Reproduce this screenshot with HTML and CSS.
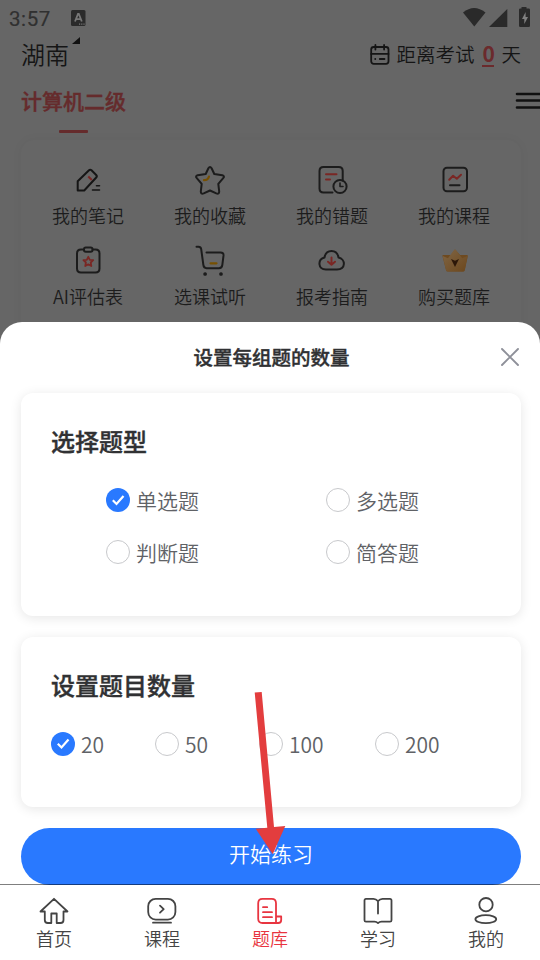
FILE: index.html
```html
<!DOCTYPE html>
<html lang="zh-CN">
<head>
<meta charset="UTF-8">
<title>题库</title>
<link rel="stylesheet" href="styles.css">
</head>
<body>
<div class="app">
  <header class="status">
    <span class="clock">3:57</span>
    <svg class="input-badge" width="15" height="16" viewBox="0 0 15 16"><rect width="14.5" height="16" rx="1.500" fill="#2b2b2b"/><path d="M4 11.500 7 4h.8l3 7.500M5 9.200h4.800" fill="none" stroke="#777" stroke-width="1.800"/><path d="M8 14.200h6" stroke="#777" stroke-width="1.200" stroke-dasharray="1.200 1"/></svg>
    <svg class="signals" width="68" height="20" viewBox="0 0 68 20"><path d="M0 5.500Q11 -3.500 22.500 5.500L11.300 19.500Z" fill="#2a2a2a"/><path d="M44.300 2v18H26z" fill="#2a2a2a"/><path d="M58.500 0h5v1.500h2.200q1.300 0 1.300 1.300v16q0 1.200-1.200 1.200h-8.600q-1.200 0-1.200-1.200v-16q0-1.300 1.200-1.300h1.300z" fill="#2a2a2a"/><path d="M62.600 5 59 12h2.300v5L65 10h-2.400z" fill="#808080"/></svg>
  </header>
  <div class="place-row">
    <span class="place">湖南</span>
    <svg class="corner" width="8" height="7" viewBox="0 0 8 7"><path d="M8 0v7H0z" fill="#111"/></svg>
    <div class="countdown">
      <svg width="20" height="21" viewBox="0 0 20 21" fill="none" stroke="#151515" stroke-width="1.800" stroke-linecap="round"><rect x="1.200" y="3" width="17.300" height="16.800" rx="2.500"/><path d="M1.200 9.900h17.300M5.400 1v4.500M14.100 1v4.500M5.200 15h.1M9.800 15h4.700"/></svg>
      <span>距离考试</span><b class="days">0</b><span>天</span>
    </div>
  </div>
  <div class="subject-row">
    <span class="subject">计算机二级</span>
    <svg width="25" height="18" viewBox="0 0 25 18"><path d="M2 2h25M2 8.500h25M2 15.500h25" stroke="#111" stroke-width="2.600" stroke-linecap="round"/></svg>
  </div>
  <div class="underline"></div>
  <section class="tools">
    <div class="tool"><svg viewBox="0 0 34 34" fill="none" stroke="#151515" stroke-width="2" stroke-linejoin="round" stroke-linecap="round"><path d="M6.700 27.500v-9.200L18 7.300q1.200-1.200 2.500 0l4.700 4.700q1.200 1.200 0 2.500L13.200 27.500z"/><path d="M25.500 22.800h3M21.500 27h7" stroke-width="1.600"/><path d="m17.300 13.500 3.500 3.500" stroke="#7a2724" stroke-linecap="butt"/></svg><span>我的笔记</span></div>
    <div class="tool"><svg viewBox="0 0 34 34" fill="none" stroke="#1c1c1c" stroke-width="2" stroke-linejoin="round" stroke-linecap="round"><path d="M15.400 5.300q1.600-2.700 3.200 0l2.700 5.700 8 1.300q2.800.8.900 2.900l-4.900 5.700.9 7.600q0 3-2.900 1.800L17 27.500l-6.300 2.800q-2.900 1.200-2.900-1.800l.9-7.600L3.800 15.200q-1.900-2.100.9-2.900l8-1.300z"/><path d="M11 17.200q4 0 5-3.700" stroke="#775000" stroke-width="2.200"/></svg><span>我的收藏</span></div>
    <div class="tool"><svg viewBox="0 0 34 34" fill="none" stroke="#1c1c1c" stroke-width="2" stroke-linejoin="round" stroke-linecap="round"><path d="M17.500 29.500H8.500q-4 0-4-4V8q0-4 4-4h15.200q4 0 4 4v9.500"/><circle cx="25" cy="23.500" r="6.600"/><path d="M25 20v3.500h3" stroke-width="1.600"/><path d="M11 11.200h10.500M11 16.500h4" stroke="#7a2724"/></svg><span>我的错题</span></div>
    <div class="tool"><svg viewBox="0 0 34 34" fill="none" stroke="#1c1c1c" stroke-width="2" stroke-linejoin="round" stroke-linecap="round"><rect x="6.500" y="4.800" width="23.500" height="23.500" rx="3.500"/><path d="M13 22.200h9.500"/><path d="m12.200 16.800 3.900-4 3.700 3 4.200-4" stroke="#7a2724"/></svg><span>我的课程</span></div>
    <div class="tool"><svg viewBox="0 0 34 34" fill="none" stroke="#1c1c1c" stroke-width="2" stroke-linejoin="round" stroke-linecap="round"><path d="M12.500 5.500H10Q6 5.500 6 9.500v15q0 4 4 4h14.500q4 0 4-4v-15q0-4-4-4h-2.800"/><rect x="13" y="3.500" width="8.500" height="4.300" rx="1.800"/><path d="m17.300 12.800 1.500 3 3.400.4-2.500 2.300.6 3.500-3-1.700-3 1.700.6-3.500-2.500-2.300 3.400-.4z" stroke="#7a2724" stroke-width="1.800"/></svg><span>AI评估表</span></div>
    <div class="tool"><svg viewBox="0 0 34 34" fill="none" stroke="#1c1c1c" stroke-width="2" stroke-linejoin="round" stroke-linecap="round"><path d="M3.500 2.800h2q2.300 0 2.700 2.400l2.200 16q.4 3 3.200 3h12.300q3 0 3.400-3l1.200-9.500q.3-3.200-3-3.200H13.500"/><path d="M17.500 19.300h6" stroke="#775000" stroke-width="2.200"/><circle cx="12.100" cy="30" r="1.200" fill="#1c1c1c" stroke-width="1.300"/><circle cx="28" cy="30" r="1.200" fill="#1c1c1c" stroke-width="1.300"/></svg><span>选课试听</span></div>
    <div class="tool"><svg viewBox="0 0 34 34" fill="none" stroke="#1c1c1c" stroke-width="2" stroke-linejoin="round" stroke-linecap="round"><path d="M11 25.500C2.800 25.500 2.300 15.500 9.500 13.500 11 4.700 22 4.700 23.500 13.500 30.800 15 31 25.500 22 25.500z"/><path d="M16.500 13.500v7.200m-3.500-3 3.500 3 3.500-3" stroke="#7a2724"/></svg><span>报考指南</span></div>
    <div class="tool"><svg viewBox="0 0 34 34"><defs><linearGradient id="gold" x2="1" y2="1"><stop stop-color="#806646"/><stop offset="1" stop-color="#6c471c"/></linearGradient></defs><path d="M6 11h8l4-5.500 5 5.500h7q1 0 .8 1.200l-3 13.800q-.4 1.500-2 1.500H11q-1.600 0-2-1.500L5.500 12.200Q5.300 11 6 11z" fill="#6e4a20"/><path d="M17 6q1-1.200 2 0l6.200 8.200 5.300-2.200L27.800 26q-.4 1.500-2 1.500H11q-1.600 0-2-1.500L5.700 12l5.300 2.200z" fill="url(#gold)"/><path d="m14 15 4 1.800L22 15l-4 8z" fill="#2c1708"/></svg><span>购买题库</span></div>
  </section>
</div>

<main class="sheet">
  <div class="sheet-head">
    <h1>设置每组题的数量</h1>
    <svg class="close" width="20" height="20" viewBox="0 0 20 20"><path d="M2 2 18 18M18 2 2 18" stroke="#8e9099" stroke-width="1.900" stroke-linecap="round"/></svg>
  </div>
  <section class="card types">
    <h2>选择题型</h2>
    <div class="type-grid">
      <label class="option"><i class="radio on"><svg viewBox="0 0 24 24"><path d="m6.800 12.200 3.700 3.800 7-8"/></svg></i>单选题</label>
      <label class="option"><i class="radio"></i>多选题</label>
      <label class="option"><i class="radio"></i>判断题</label>
      <label class="option"><i class="radio"></i>简答题</label>
    </div>
  </section>
  <section class="card counts">
    <h2>设置题目数量</h2>
    <div class="count-row">
      <label class="option"><i class="radio on"><svg viewBox="0 0 24 24"><path d="m6.800 11.700 3.700 3.800 7-8"/></svg></i>20</label>
      <label class="option"><i class="radio"></i>50</label>
      <label class="option"><i class="radio"></i>100</label>
      <label class="option"><i class="radio"></i>200</label>
    </div>
  </section>
  <button class="start">开始练习</button>
  <nav class="tabs">
    <a class="tab"><svg viewBox="0 0 32 30"><path d="M2.500 15.500 16 2.800l13.500 12.700h-4v8.500q0 3-3 3h-3.800v-9.500h-5.400V27H9.800q-3 0-3-3v-8.500z"/></svg><span>首页</span></a>
    <a class="tab"><svg viewBox="0 0 32 30"><rect x="2.200" y="2.800" width="27.200" height="20.800" rx="7.500"/><path d="m14 9.700 3.700 3.500-3.700 3.500M7 26.700h18"/></svg><span>课程</span></a>
    <a class="tab active"><svg viewBox="0 0 32 30"><path d="M24.500 27H8.500q-4.300 0-4.300-4.300V7.200q0-4.300 4.300-4.300h9.200q4.300 0 4.300 4.300V27h2.200q3 0 3-3v-3.500H22M9 11.200h4.200M9 16.200h9M9 21.200h9"/></svg><span>题库</span></a>
    <a class="tab"><svg viewBox="0 0 32 30"><path d="M16 17.500V5.200q-2-2.300-4.500-2.300H4q-1.500 0-1.500 1.500v19.800q0 1.500 1.500 1.500h8.500q2 0 3.500 1.400 1.500-1.400 3.500-1.400H28q1.500 0 1.500-1.500V4.400q0-1.500-1.500-1.500h-7.500Q18 2.900 16 5.200"/></svg><span>学习</span></a>
    <a class="tab"><svg viewBox="0 0 32 30"><circle cx="16" cy="8.700" r="6.700"/><ellipse cx="15.800" cy="23.200" rx="10.400" ry="4"/></svg><span>我的</span></a>
  </nav>
</main>
<svg class="pointer" width="32" height="164" viewBox="0 0 32 164"><path d="M.7.5 7.700 0 20 135 31.300 134 18.700 162.300 1.700 136.700 13.300 135.800z" fill="#e33d3e"/></svg>
</body>
</html>
```

FILE: styles.css
```css
* { box-sizing: border-box; }
body {
  margin: 0;
  width: 540px;
  height: 960px;
  overflow: hidden;
  position: relative;
  background: #666;
  font-family: "Noto Sans CJK SC", sans-serif;
  font-weight: 350;
  color: #151515;
}
svg { display: block; flex: none; }
h1, h2 { margin: 0; color: #303133; font-weight: 500; -webkit-text-stroke: .4px #303133; }

.app { height: 322px; overflow: hidden; }
.status { height: 36px; display: flex; align-items: center; padding-left: 9px; }
.clock {
  font: 400 20.5px/24px Roboto, sans-serif;
  color: #303030;
  -webkit-text-stroke: .2px #303030;
  width: 62px;
  letter-spacing: .6px;
  padding-top: 1px;
}
.signals { margin: -2px 9px 0 auto; }
.place-row { height: 36px; display: flex; align-items: center; padding: 0 19px 0 21px; }
.place { font-size: 24px; line-height: 36px; }
.corner { margin: -28px 0 0 3px; }
.countdown { margin-left: auto; display: flex; align-items: center; font-size: 19.5px; line-height: 30px; }
.countdown svg { margin-right: 6px; }
.days { color: #6b2a2c; width: 12px; margin: 0 7px 0 8px; font-size: 21px; font-weight: 700; line-height: 23px; border-bottom: 2px solid #6b2a2c; text-align: center; }
.subject-row { height: 58px; display: flex; align-items: center; justify-content: space-between; padding-left: 21px; }
.subject { font-size: 21px; font-weight: 500; -webkit-text-stroke: .4px #652b2c; color: #652b2c; margin-top: -2px; }
.underline { width: 29px; height: 3px; margin-left: 59px; background: #652b2c; border-radius: 1px; }
.tools {
  margin: 7px 19px 0 21px;
  height: 220px;
  padding: 23px 6px 0;
  border-radius: 14px;
  box-shadow: 0 0 12px rgba(0, 0, 0, .04);
  display: grid;
  grid-template-columns: repeat(4, 122px);
  grid-template-rows: 81px 81px;
}
.tool { display: flex; flex-direction: column; align-items: center; font-size: 18px; line-height: 24px; color: #1c1c1c; }
.tool svg { width: 34px; height: 34px; margin-bottom: 6px; }

.sheet {
  position: absolute;
  left: 0;
  top: 322px;
  width: 540px;
  height: 638px;
  background: #fff;
  border-radius: 22px 22px 0 0;
  display: flex;
  flex-direction: column;
}
.sheet-head { height: 71px; padding-bottom: 2px; display: grid; grid-template-columns: 60px 1fr 60px; align-items: center; }
.sheet-head h1 { grid-column: 2; text-align: center; font-size: 19.500px; line-height: 30px; padding-left: 3px; }
.close { justify-self: center; }
.card {
  margin: 0 19px 21px 21px;
  padding: 30px 30px 0;
  border-radius: 12px;
  background: #fff;
  box-shadow: 0 2px 12px rgba(0, 0, 0, .1);
}
.types { height: 223px; }
.counts { height: 170px; }
.card h2 { font-size: 24px; line-height: 36px; }
.type-grid { display: grid; grid-template-columns: 220px 1fr; row-gap: 28px; margin: 29px 0 0 55px; }
.option { display: flex; align-items: center; height: 24px; gap: 6px; font-size: 21px; color: #606266; }
.radio { display: block; flex: none; width: 24px; height: 24px; border: 1px solid #c8c9cc; border-radius: 50%; }
.radio.on { border: 0; background: #2979ff; }
.radio path { fill: none; stroke: #fff; stroke-width: 2.200; }
.count-row { display: grid; grid-template-columns: 104px 104px 116px 1fr; margin-top: 29px; }
.start {
  flex: none;
  margin: 0 19px 0 21px;
  height: 57px;
  padding: 0 0 8px;
  border: 0;
  border-radius: 29px;
  background: #2979ff;
  color: #fff;
  font: 350 21px/30px "Noto Sans CJK SC", sans-serif;
}
.tabs {
  margin-top: -1px;
  height: 76px;
  border-top: 1px solid rgba(0, 0, 0, .5);
  display: grid;
  grid-template-columns: repeat(5, 1fr);
}
.tab { display: flex; flex-direction: column; align-items: center; padding-top: 11px; font-size: 18px; line-height: 26px; color: #444; }
.tab svg { width: 32px; height: 30px; margin-bottom: -1px; fill: none; stroke: currentColor; stroke-width: 1.800; stroke-linejoin: round; stroke-linecap: round; }
.tab.active { color: #e83540; }
.pointer { position: absolute; left: 254px; top: 692px; }
```
